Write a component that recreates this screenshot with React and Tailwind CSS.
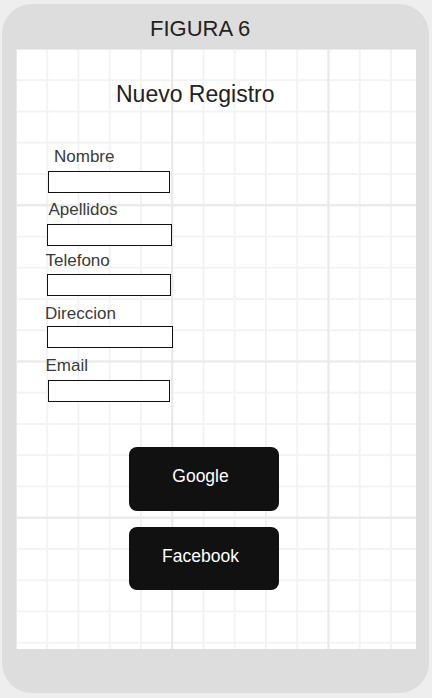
const fields = [
  { label: 'Nombre',    labelCls: 'mt-[40px] ml-[38px]',   boxCls: 'mt-[4px] ml-[32px] w-[122px]' },
  { label: 'Apellidos', labelCls: 'mt-[7px] ml-[32.5px]',  boxCls: 'mt-[4px] ml-[31px] w-[124.5px]' },
  { label: 'Telefono',  labelCls: 'mt-[5px] ml-[29.5px]',  boxCls: 'mt-[3px] ml-[31px] w-[124px]' },
  { label: 'Direccion', labelCls: 'mt-[8px] ml-[29px]',    boxCls: 'mt-[2px] ml-[30.5px] w-[126.5px]' },
  { label: 'Email',     labelCls: 'mt-[8px] ml-[29.5px]',  boxCls: 'mt-[4px] ml-[31.5px] w-[122.5px]' },
];

export default function App() {
  return (
    <div className="w-[432px] h-[698px] bg-[#eeeeee] pt-[4px] pl-[2px] font-['Liberation_Sans',Arial,sans-serif]">
      {/* Phone frame */}
      <div className="w-[427px] h-[689px] rounded-[30px] bg-[#dddddd] flex flex-col">
        <div className="h-[45px] pt-[13px] pl-[148px] text-[22px] leading-[24px] text-[#222222]">
          FIGURA 6
        </div>

        {/* Screen with grid */}
        <div
          className="ml-[14px] w-[400px] h-[600px] bg-white bg-[linear-gradient(to_right,#e9e9e9_2px,transparent_2px),linear-gradient(to_bottom,#e9e9e9_2px,transparent_2px),linear-gradient(to_right,#f3f3f3_2px,transparent_2px),linear-gradient(to_bottom,#f3f3f3_2px,transparent_2px)] bg-[size:156.25px_156.25px,156.25px_156.25px,31.25px_31.25px,31.25px_31.25px] bg-[position:-1px_-1px]"
        >
          <div className="pt-[32px] pl-[100px] text-[23px] leading-[26px] text-[#222222]">
            Nuevo Registro
          </div>

          {fields.map((f) => (
            <div key={f.label}>
              <div className={`${f.labelCls} text-[17px] leading-[20px] text-[#3a3a3a]`}>{f.label}</div>
              <div className={`${f.boxCls} h-[22px] border-[1.5px] border-[#111111] bg-white`} />
            </div>
          ))}

          <div className="mt-[45px] ml-[113px] flex flex-col gap-[16px]">
            <button className="w-[150px] h-[63.5px] rounded-lg bg-[#111111] text-white text-[17.5px] flex items-center justify-center pr-[7px] pb-[5px]">
              Google
            </button>
            <button className="w-[150px] h-[63px] rounded-lg bg-[#111111] text-white text-[17.5px] flex items-center justify-center pr-[7px] pb-[4px]">
              Facebook
            </button>
          </div>
        </div>
      </div>
    </div>
  );
}
